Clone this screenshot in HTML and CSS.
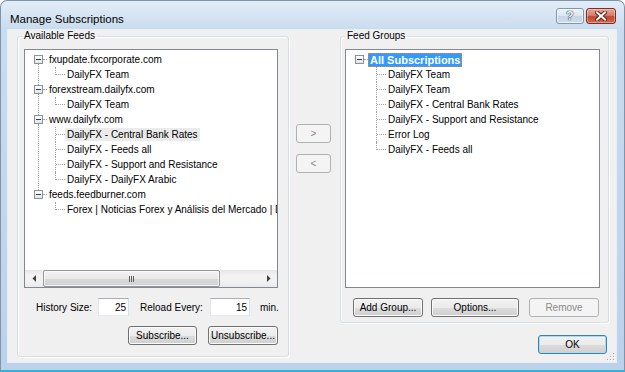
FILE: index.html
```html
<!DOCTYPE html>
<html lang="en">
<head>
  <meta charset="UTF-8" />
  <title>Manage Subscriptions</title>
  <link rel="stylesheet" href="styles.css">
</head>
<body>

  <div class="window">
    <!-- Caption -->
    <div class="titlebar">
      <span class="title">Manage Subscriptions</span>
      <div class="caption-btns">
        <div class="cap-btn help">?</div>
        <div class="cap-btn close">
          <svg width="12" height="10" viewBox="0 0 12 10">
            <path d="M2 1.5 L10 8.5 M10 1.5 L2 8.5" stroke="#5b2218" stroke-width="4" stroke-linecap="square"/>
            <path d="M2 1.5 L10 8.5 M10 1.5 L2 8.5" stroke="#ffffff" stroke-width="2" stroke-linecap="square"/>
          </svg>
        </div>
      </div>
    </div>

    <div class="client">
      <!-- Available feeds -->
      <fieldset class="group feeds">
        <legend class="legend-feeds">Available Feeds</legend>
        <div class="tree">
          <ul class="nodes">
            <li class="root">
              <div class="row"><span class="exp"></span><span class="dash"></span><span class="label">fxupdate.fxcorporate.com</span></div>
              <ul>
                <li class="leaf"><div class="row"><span class="dash"></span><span class="label">DailyFX Team</span></div></li>
              </ul>
            </li>
            <li class="root">
              <div class="row"><span class="exp"></span><span class="dash"></span><span class="label">forexstream.dailyfx.com</span></div>
              <ul>
                <li class="leaf"><div class="row"><span class="dash"></span><span class="label">DailyFX Team</span></div></li>
              </ul>
            </li>
            <li class="root">
              <div class="row"><span class="exp"></span><span class="dash"></span><span class="label">www.dailyfx.com</span></div>
              <ul>
                <li class="leaf"><div class="row"><span class="dash"></span><span class="label inactive">DailyFX - Central Bank Rates</span></div></li>
                <li class="leaf"><div class="row"><span class="dash"></span><span class="label">DailyFX - Feeds all</span></div></li>
                <li class="leaf"><div class="row"><span class="dash"></span><span class="label">DailyFX - Support and Resistance</span></div></li>
                <li class="leaf"><div class="row"><span class="dash"></span><span class="label">DailyFX - DailyFX Arabic</span></div></li>
              </ul>
            </li>
            <li class="root">
              <div class="row"><span class="exp"></span><span class="dash"></span><span class="label">feeds.feedburner.com</span></div>
              <ul>
                <li class="leaf"><div class="row"><span class="dash"></span><span class="label">Forex | Noticias Forex y Análisis del Mercado | DailyFX</span></div></li>
              </ul>
            </li>
          </ul>
          <div class="hscroll">
            <div class="sb-arrow">
              <svg width="4" height="7" viewBox="0 0 4 7"><polygon points="4,0 4,7 0.5,3.5" fill="#404040"/></svg>
            </div>
            <div class="sb-track">
              <div class="sb-thumb"><span class="grip"></span></div>
            </div>
            <div class="sb-arrow">
              <svg width="4" height="7" viewBox="0 0 4 7"><polygon points="0,0 0,7 3.5,3.5" fill="#404040"/></svg>
            </div>
          </div>
        </div>

        <div class="opts">
          <span class="lbl lbl-hist">History Size:</span>
          <input class="num num-hist" type="text" value="25" />
          <span class="lbl lbl-reload">Reload Every:</span>
          <input class="num num-reload" type="text" value="15" />
          <span class="lbl lbl-min">min.</span>
        </div>

        <div class="btn-row feeds-btns">
          <button class="btn w-subscribe">Subscribe...</button>
          <button class="btn w-unsubscribe">Unsubscribe...</button>
        </div>
      </fieldset>

      <!-- Move buttons -->
      <div class="mid">
        <button class="btn move" disabled>&gt;</button>
        <button class="btn move" disabled>&lt;</button>
      </div>

      <!-- Feed groups -->
      <div class="right-col">
        <fieldset class="group groups">
          <legend>Feed Groups</legend>
          <div class="tree">
            <ul class="nodes">
              <li class="root">
                <div class="row"><span class="exp"></span><span class="dash"></span><span class="label sel">All Subscriptions</span></div>
                <ul>
                  <li class="leaf"><div class="row"><span class="dash"></span><span class="label">DailyFX Team</span></div></li>
                  <li class="leaf"><div class="row"><span class="dash"></span><span class="label">DailyFX Team</span></div></li>
                  <li class="leaf"><div class="row"><span class="dash"></span><span class="label">DailyFX - Central Bank Rates</span></div></li>
                  <li class="leaf"><div class="row"><span class="dash"></span><span class="label">DailyFX - Support and Resistance</span></div></li>
                  <li class="leaf"><div class="row"><span class="dash"></span><span class="label">Error Log</span></div></li>
                  <li class="leaf"><div class="row"><span class="dash"></span><span class="label">DailyFX - Feeds all</span></div></li>
                </ul>
              </li>
            </ul>
          </div>

          <div class="btn-row groups-btns">
            <button class="btn w-add">Add Group...</button>
            <button class="btn w-options">Options...</button>
            <button class="btn w-remove" disabled>Remove</button>
          </div>
        </fieldset>

        <button class="btn default w-ok">OK</button>
      </div>

      <svg class="grip-corner" width="8" height="8" viewBox="0 0 8 8">
        <rect x="6" y="0" width="1" height="1" fill="#a3a3a3"/><rect x="7" y="1" width="1" height="1" fill="#fff"/>
        <rect x="3" y="3" width="1" height="1" fill="#a3a3a3"/><rect x="4" y="4" width="1" height="1" fill="#fff"/>
        <rect x="6" y="3" width="1" height="1" fill="#a3a3a3"/><rect x="7" y="4" width="1" height="1" fill="#fff"/>
        <rect x="0" y="6" width="1" height="1" fill="#a3a3a3"/><rect x="1" y="7" width="1" height="1" fill="#fff"/>
        <rect x="3" y="6" width="1" height="1" fill="#a3a3a3"/><rect x="4" y="7" width="1" height="1" fill="#fff"/>
        <rect x="6" y="6" width="1" height="1" fill="#a3a3a3"/><rect x="7" y="7" width="1" height="1" fill="#fff"/>
      </svg>
    </div>
  </div>

</body>
</html>
```

FILE: styles.css
```css
* {
  box-sizing: border-box;
  margin: 0;
  padding: 0;
}

html, body {
  width: 625px;
  height: 372px;
  overflow: hidden;
  background: #ffffff;
  font-family: 'Liberation Sans', Arial, sans-serif;
  font-size: 10px;
  color: #000;
}

/* Window frame */
.window {
  width: 625px;
  height: 372px;
  display: flex;
  flex-direction: column;
  padding: 0 8px 8px 7px;
  border: 1px solid #7f93aa;
  border-bottom: 2px solid #2fb3d8;
  border-radius: 7px 7px 0 0;
  background: linear-gradient(#e3edf8 0px, #c9dbee 29px, #bcd2ea 100%);
}

.titlebar {
  height: 29px;
  flex: none;
  display: flex;
  justify-content: space-between;
  align-items: flex-start;
}

.title {
  margin-top: 11px;
  margin-left: 2px;
  font-size: 11.5px;
  line-height: 14px;
  color: #000;
}

.caption-btns {
  display: flex;
  gap: 2px;
  margin-top: 7px;
}

.cap-btn {
  height: 16px;
  border-radius: 3px;
  display: flex;
  align-items: center;
  justify-content: center;
}

.help {
  width: 28px;
  border: 1px solid #8195ad;
  background: linear-gradient(#eef3f9 0%, #dae5f1 50%, #c6d6e8 51%, #cddcec 100%);
  box-shadow: inset 0 0 0 1px rgba(255, 255, 255, 0.6);
  font-weight: bold;
  font-size: 12px;
  color: #eef2f7;
  text-shadow: 0 0 1px #3b4a5c, 0 0 1px #3b4a5c, 0 0 1px #3b4a5c;
}

.close {
  width: 30px;
  border: 1px solid #7d2f24;
  background: linear-gradient(#e7a697 0%, #d5806d 45%, #c2472f 55%, #cf6a4f 100%);
  box-shadow: inset 0 0 0 1px rgba(255, 220, 210, 0.45);
}

/* Client area */
.client {
  position: relative;
  height: 332px;
  flex: none;
  display: flex;
  align-items: flex-start;
  padding-left: 9px;
  background: #f0f0f0;
  box-shadow: 0 0 0 1px #e6eef7;
}

.group {
  flex: none;
  min-width: 0;
  min-inline-size: 0;
  border: 1px solid #d5dfe5;
  border-radius: 3px;
  box-shadow: inset 1px 1px 0 #fff, 1px 1px 0 #fff;
  padding-top: 7px;
}

.group legend {
  padding: 0 2px;
  line-height: 12px;
  font-size: 10px;
}

.legend-feeds {
  margin-left: -2px;
}

.feeds {
  width: 272px;
  padding-left: 6px;
  padding-right: 10px;
  padding-bottom: 11px;
}

.groups {
  width: 269px;
  padding-left: 4px;
  padding-right: 8px;
  padding-bottom: 5px;
}

/* Tree view */
.tree {
  height: 239px;
  width: 100%;
  min-width: 0;
  display: flex;
  flex-direction: column;
  overflow: hidden;
  border: 1px solid #828790;
  background: #fff;
}

.nodes {
  flex: 1;
  min-height: 0;
  min-width: 0;
  overflow: hidden;
  list-style: none;
  padding-top: 2px;
}

.nodes ul {
  list-style: none;
}

.root, .leaf {
  position: relative;
}

.root:not(:last-child)::before {
  content: "";
  position: absolute;
  left: 13px;
  top: 12px;
  bottom: -3px;
  border-left: 1px dotted #a0a0a0;
}

.leaf::before {
  content: "";
  position: absolute;
  left: 30px;
  top: 0;
  bottom: 0;
  border-left: 1px dotted #a0a0a0;
}

.leaf:last-child::before {
  bottom: auto;
  height: 8px;
}

.row {
  height: 15px;
  display: flex;
  align-items: center;
  white-space: nowrap;
}

.root > .row {
  padding-left: 9px;
}

.leaf > .row {
  padding-left: 31px;
}

.exp {
  position: relative;
  flex: none;
  width: 9px;
  height: 9px;
  border: 1px solid #919191;
  background: linear-gradient(#ffffff, #e4e4e4);
}

.exp::after {
  content: "";
  position: absolute;
  left: 1px;
  top: 3px;
  width: 5px;
  height: 1px;
  background: #1d3f8c;
}

.dash {
  flex: none;
  height: 0;
  border-top: 1px dotted #a0a0a0;
}

.root > .row .dash {
  width: 4px;
}

.leaf > .row .dash {
  width: 9px;
}

.label {
  flex: none;
  padding: 0 2px;
  line-height: 13px;
}

.label.inactive {
  background: #ebebeb;
}

.label.sel {
  padding: 0 1px;
  line-height: 12px;
  font-size: 11px;
  font-weight: bold;
  color: #fff;
  background: #3399ff;
  border: 1px dotted #d98a2b;
}

/* Horizontal scroll bar */
.hscroll {
  flex: none;
  height: 17px;
  display: flex;
  background: linear-gradient(#e6e6e6, #f2f2f2 30%, #f2f2f2 70%, #e9e9e9);
}

.sb-arrow {
  width: 17px;
  flex: none;
  display: flex;
  align-items: center;
  justify-content: center;
}

.sb-track {
  flex: 1;
  display: flex;
  align-items: stretch;
  padding: 0 0 0 1px;
}

.sb-thumb {
  width: 177px;
  border: 1px solid #979797;
  border-radius: 2px;
  background: linear-gradient(#f3f3f3 0%, #e8e8e8 50%, #d9d9d9 51%, #d3d3d3 100%);
  box-shadow: inset 0 0 0 1px rgba(255, 255, 255, 0.7);
  display: flex;
  align-items: center;
  justify-content: center;
}

.grip {
  width: 5px;
  height: 6px;
  background: repeating-linear-gradient(90deg, #5c5c5c 0 1px, transparent 1px 2px);
}

/* Options row */
.opts {
  display: flex;
  align-items: center;
  margin-top: 10px;
  padding-left: 12px;
  height: 18px;
}

.lbl {
  flex: none;
  white-space: nowrap;
}

.lbl-hist {
  width: 62px;
}

.lbl-reload {
  margin-left: 11px;
  width: 70px;
}

.lbl-min {
  margin-left: 10px;
}

.num {
  flex: none;
  height: 18px;
  padding: 0 2px 0 0;
  border: 1px solid;
  border-color: #abadb3 #dbdfe6 #e3e9ef #e2e3ea;
  background: #fff;
  font-family: 'Liberation Sans', Arial, sans-serif;
  font-size: 10px;
  text-align: right;
}

.num-hist {
  width: 31px;
}

.num-reload {
  width: 40px;
}

/* Buttons */
.btn {
  flex: none;
  height: 19px;
  border: 1px solid #707070;
  border-radius: 3px;
  background: linear-gradient(#f2f2f2 0%, #ebebeb 50%, #dddddd 51%, #cfcfcf 100%);
  box-shadow: inset 0 0 0 1px #fbfbfb;
  font-family: 'Liberation Sans', Arial, sans-serif;
  font-size: 10px;
  color: #000;
}

.btn:disabled {
  border-color: #adb2b5;
  background: #f4f4f4;
  box-shadow: none;
  color: #8a8a8a;
}

.btn.default {
  border-color: #3c7fb1;
  box-shadow: inset 0 0 0 1px #a9dcf6;
}

.btn-row {
  display: flex;
}

.feeds-btns {
  margin-top: 10px;
  justify-content: flex-end;
  gap: 11px;
}

.groups-btns {
  margin-top: 10px;
  padding-left: 8px;
}

.w-subscribe { width: 69px; }
.w-unsubscribe { width: 70px; }
.w-add { width: 70px; }
.w-options { width: 88px; margin-left: 8px; }
.w-remove { width: 70px; margin-left: 10px; }

.mid {
  width: 51px;
  flex: none;
  display: flex;
  flex-direction: column;
  gap: 11px;
  padding-top: 94px;
  padding-left: 7px;
}

.move {
  width: 35px;
  font-size: 10px;
}

.right-col {
  flex: none;
  display: flex;
  flex-direction: column;
}

.w-ok {
  width: 69px;
  margin-top: 12px;
  align-self: flex-end;
  margin-right: 2px;
}

.grip-corner {
  position: absolute;
  right: 1px;
  bottom: 1px;
}
```
